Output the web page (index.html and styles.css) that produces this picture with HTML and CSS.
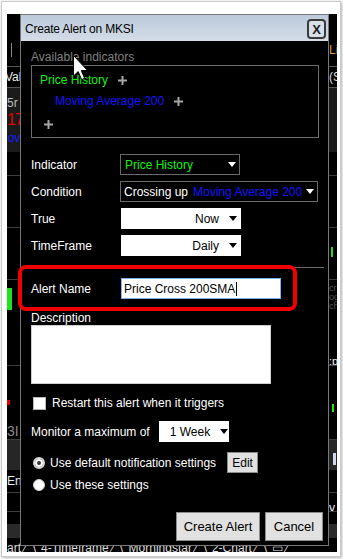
FILE: index.html
```html
<!DOCTYPE html>
<html>
<head>
<meta charset="utf-8">
<title>Create Alert</title>
<link rel="stylesheet" href="styles.css">
</head>
<body>
<div class="frame">
  <div class="screen">
    <div class="bg">
      <div class="row r1"><div class="lc"><i class="tick"></i></div><div class="rc"><span class="orange">Li</span></div></div>
      <div class="row r2"><div class="lc"><span class="clipl">Val</span></div><div class="rc">(S</div></div>
      <div class="row r3">
        <div class="lc stack"><span class="t5r">5r</span><span class="t17">17</span><span class="tlov">lov</span></div>
        <div class="rc"></div>
      </div>
      <div class="row r4 line"><div class="lc"></div><div class="rc"></div></div>
      <div class="row r5 line"><div class="lc"></div><div class="rc"></div></div>
      <div class="row r6 line"><div class="lc"></div><div class="rc"><i class="gtick"></i></div></div>
      <div class="row r7 line"><div class="lc"><i class="gbar"></i></div><div class="rc stack faint"><span>cr</span><span>og</span><span>ch</span><span class="wp">:p</span></div></div>
      <div class="row r8 line"><div class="lc stack"><i class="rbar"></i><span class="t3">3I</span></div><div class="rc"><i class="gtick2"></i></div></div>
      <div class="row r9 band"><div class="lc"></div><div class="rc"><i class="lt"></i></div></div>
      <div class="row r10 line"><div class="lc"><span class="wht">En</span></div><div class="rc"></div></div>
      <div class="row r11 line"><div class="lc"></div><div class="rc"><span class="wht">y</span></div></div>
      <div class="row r12"><div class="lc"></div><div class="rc"></div></div>
      <div class="row r13 band2"><div class="lc"></div><div class="rc"></div></div>
      <div class="row r14"><span class="tabs">art ⁄ ∖ 4-Timeframe ⁄ ∖ Morningstar ⁄ ∖ 2-Chart ⁄ ∖ ▭ ⁄</span></div>
    </div>

    <div class="dialog">
      <div class="titlebar">
        <span class="title">Create Alert on MKSI</span>
        <span class="close">X</span>
      </div>
      <div class="body">
        <div class="avail">Available indicators</div>
        <div class="indbox">
          <div class="irow"><span class="green">Price History</span><svg class="plus" width="9" height="9" viewBox="0 0 9 9"><rect x="3.5" y="0" width="2" height="9"/><rect x="0" y="3.5" width="9" height="2"/></svg></div>
          <div class="irow sub"><span class="blue">Moving Average 200</span><svg class="plus" width="9" height="9" viewBox="0 0 9 9"><rect x="3.5" y="0" width="2" height="9"/><rect x="0" y="3.5" width="9" height="2"/></svg></div>
          <div class="irow add"><svg class="plus" width="9" height="9" viewBox="0 0 9 9"><rect x="3.5" y="0" width="2" height="9"/><rect x="0" y="3.5" width="9" height="2"/></svg></div>
        </div>

        <div class="frow first">
          <span class="lbl">Indicator</span>
          <div class="sel dark w-ind"><span class="green">Price History</span><svg class="arr" width="8" height="5" viewBox="0 0 8 5"><polygon points="0,0 8,0 4,5" fill="#fff"/></svg></div>
        </div>
        <div class="frow">
          <span class="lbl">Condition</span>
          <div class="sel dark w-cond"><span class="wtxt">Crossing up</span><span class="blue cond-ma">Moving Average 200</span><svg class="arr" width="8" height="5" viewBox="0 0 8 5"><polygon points="0,0 8,0 4,5" fill="#fff"/></svg></div>
        </div>
        <div class="frow">
          <span class="lbl">True</span>
          <div class="sel light w-true"><span class="rtxt">Now</span><svg class="arr" width="8" height="5" viewBox="0 0 8 5"><polygon points="0,0 8,0 4,5" fill="#000"/></svg></div>
        </div>
        <div class="frow">
          <span class="lbl">TimeFrame</span>
          <div class="sel light w-true"><span class="rtxt">Daily</span><svg class="arr" width="8" height="5" viewBox="0 0 8 5"><polygon points="0,0 8,0 4,5" fill="#000"/></svg></div>
        </div>
        <div class="sep"></div>
        <div class="frow name">
          <span class="lbl">Alert Name</span>
          <div class="input"><span>Price Cross 200SMA</span><i class="caret"></i></div>
        </div>
        <div class="desc-lbl">Description</div>
        <div class="textarea"></div>
        <div class="crow">
          <span class="check"></span><span>Restart this alert when it triggers</span>
        </div>
        <div class="mrow">
          <span>Monitor a maximum of</span>
          <div class="sel light w-week"><span class="wk">1 Week</span><svg class="arr" width="8" height="5" viewBox="0 0 8 5"><polygon points="0,0 8,0 4,5" fill="#000"/></svg></div>
        </div>
        <div class="rrow one">
          <span class="radio on"></span><span>Use default notification settings</span><span class="btn edit">Edit</span>
        </div>
        <div class="rrow two">
          <span class="radio"></span><span>Use these settings</span>
        </div>
        <div class="brow">
          <span class="btn big create">Create Alert</span>
          <span class="btn big cancel">Cancel</span>
        </div>
      </div>
    </div>

    <div class="annot"></div>
    <svg class="cursor" width="16" height="26" viewBox="0 0 16 26">
      <path d="M0.5 0.5 L0.5 21 L5.2 16.6 L8.6 24.6 L11.6 23.3 L8.3 15.5 L14.6 15.5 Z" fill="#fff" stroke="#000" stroke-width="1"/>
    </svg>
  </div>
</div>
</body>
</html>
```

FILE: styles.css
```css
* { box-sizing: border-box; }
html, body { margin: 0; padding: 0; background: #fff; }
body {
  width: 343px; height: 559px; overflow: hidden;
  font-family: "Liberation Sans", Arial, sans-serif;
  font-size: 12px; color: #fff;
}
.frame {
  margin: 1px 0 0 1px;
  width: 340px; height: 556px;
  border: 1px solid #c9c9c9;
  box-shadow: 1px 1px 3px rgba(0,0,0,0.3);
  padding: 12px 3px 4px 5px;
  background: #fff;
}
.screen {
  position: relative;
  width: 330px; height: 538px;
  background: #000;
  overflow: hidden;
}

/* background application fragments */
.bg { display: flex; flex-direction: column; width: 330px; }
.row { display: flex; justify-content: space-between; overflow: hidden; flex: none; }
.lc { width: 13px; overflow: hidden; position: relative; white-space: nowrap; }
.rc { width: 8px; overflow: hidden; white-space: nowrap; color: #fff; }
.stack { display: flex; flex-direction: column; }
.line { border-bottom: 1px solid #3c3c3c; }
.r1 { height: 53px; border-bottom: 1px solid #555; }
.r1 .lc { padding: 29px 0 0 4px; }
.tick { display: block; width: 1px; height: 14px; background: #8a8a8a; }
.r1 .rc { padding-top: 29px; line-height: 14px; }
.orange { color: #d79a52; }
.r2 { height: 21px; line-height: 21px; border-bottom: 1px solid #555; }
.clipl { margin-left: -2px; color: #eee; }
.r2 .rc { color: #ddd; }
.r3 { height: 64px; background: #1b1b1b; }
.t5r { color: #bbb; line-height: 14px; margin-top: 8px; }
.t17 { color: #e00000; font-size: 16px; line-height: 20px; letter-spacing: -1px; }
.tlov { color: #1a1aff; line-height: 16px; margin-left: -2px; }
.r4 { height: 24px; }
.r5 { height: 52px; }
.r6 { height: 52px; }
.gtick { display: block; width: 2px; height: 10px; background: #22dd22; margin: 19px 0 0 2px; }
.r7 { height: 86px; }
.gbar { display: block; width: 5px; height: 22px; background: #1de21d; margin-top: 8px; }
.faint { color: #555; line-height: 9px; font-size: 9px; padding-top: 4px; }
.wp { color: #eee; font-size: 11px; margin-top: 46px; }
.r8 { height: 74px; }
.rbar { display: block; width: 3px; height: 10px; background: #e00000; margin-top: 34px; }
.t3 { color: #8a8a8a; font-size: 14px; line-height: 16px; margin-top: 18px; }
.gtick2 { display: block; width: 2px; height: 8px; background: #22dd22; margin: 38px 0 0 3px; }
.band { height: 30px; background: #262626; }
.lt { display: block; width: 3px; height: 12px; background: #cfd8e8; margin: 13px 0 0 4px; }
.r10 { height: 23px; line-height: 23px; }
.wht { color: #eee; }
.r11 { height: 19px; line-height: 30px; }
.r12 { height: 12px; }
.band2 { height: 14px; background: #2a2a2a; }
.r14 { height: 14px; }
.tabs { color: #ddd; white-space: nowrap; line-height: 12px; margin-top: 4px; }

/* dialog */
.dialog {
  position: absolute; left: 13px; top: 0;
  width: 309px; height: 532px;
  border: 1px solid #787878;
  background: #000;
  display: flex; flex-direction: column;
}
.titlebar {
  height: 26px; flex: none;
  background: linear-gradient(#bccadb, #d3dce7);
  display: flex; align-items: center; justify-content: space-between;
  padding: 0 2px 0 4px;
  color: #000;
}
.title { font-size: 12px; letter-spacing: -0.2px; margin-top: 1px; }
.close {
  width: 19px; height: 20px;
  border: 2px solid #3a3a3a; border-radius: 4px;
  background: #d6dee8;
  font-weight: bold; font-size: 13px; color: #222;
  display: flex; align-items: center; justify-content: center;
  margin-top: 2px;
}
.body { padding: 0 9px 0 10px; display: flex; flex-direction: column; flex: 1; white-space: nowrap; }
.avail { color: #808080; line-height: 15px; margin-top: 9px; }
.indbox {
  height: 73px; border: 1px solid #6b6b6b;
  padding: 6px 0 0 8px;
}
.irow { display: flex; align-items: center; height: 16px; }
.irow.sub { margin-top: 5px; padding-left: 15px; }
.irow.add { margin-top: 7px; padding-left: 4px; }
.plus { fill: #a6a6a6; margin-left: 10px; }
.irow.add .plus { margin-left: 0; }
.green { color: #14ef14; }
.blue { color: #1414ff; }

.frow { display: flex; align-items: center; height: 21px; margin-top: 6px; }
.frow.first { margin-top: 16px; }
.lbl { width: 89px; flex: none; }
.sel { height: 21px; display: flex; align-items: center; flex: none; }
.sel .arr { flex: none; }
.dark { border: 1px solid #6a6a6a; background: #000; padding: 0 3px 0 4px; justify-content: space-between; }
.w-ind { width: 120px; }
.w-cond { width: 198px; padding-left: 3px; }
.wtxt { color: #fff; }
.cond-ma { margin-left: 5px; flex: 1; }
.light { background: #fff; color: #000; margin-left: 1px; justify-content: flex-end; padding-right: 4px; }
.w-true { width: 120px; }
.rtxt { margin-right: 10px; }
.sep { height: 1px; background: #6b6b6b; margin-top: 11px; margin-right: -5px; }
.frow.name { margin-top: 10px; }
.input {
  width: 160px; height: 21px; margin-left: 1px;
  background: #fff; border: 1px solid #7ab4ec;
  color: #000; display: flex; align-items: center; padding-left: 2px;
}
.caret { display: block; width: 1px; height: 14px; background: #000; margin-left: 1px; }
.desc-lbl { line-height: 14px; margin-top: 12px; }
.textarea { width: 240px; height: 59px; background: #fff; border: 1px solid #d0d0d0; }
.crow { display: flex; align-items: center; height: 16px; margin-top: 11px; padding-left: 2px; }
.check { width: 13px; height: 13px; background: #fff; border: 1px solid #b8b8b8; margin-right: 6px; }
.mrow { display: flex; align-items: center; height: 21px; margin-top: 10px; }
.w-week { width: 70px; margin-left: 9px; justify-content: flex-start; padding-left: 11px; }
.wk { margin-right: 10px; white-space: nowrap; }
.rrow { display: flex; align-items: center; padding-left: 2px; }
.rrow.one { height: 21px; margin-top: 10px; }
.rrow.two { height: 16px; margin-top: 4px; }
.radio {
  width: 12px; height: 12px; border-radius: 50%;
  background: #fff; border: 1px solid #cfcfcf;
  margin-right: 5px; position: relative; flex: none;
}
.radio.on { border: 2px solid #d8d8d8; background: #333; box-shadow: inset 0 0 0 2px #fff; }
.btn {
  background: #e1e1e1; border: 1px solid #8c8c8c; color: #000;
  display: flex; align-items: center; justify-content: center;
}
.edit { width: 31px; height: 21px; margin-left: 11px; }
.brow { display: flex; justify-content: flex-end; margin-top: 19px; margin-right: -4px; gap: 5px; }
.big { height: 29px; font-size: 13px; }
.create { width: 84px; }
.cancel { width: 58px; }

/* overlays */
.annot {
  position: absolute; left: 11px; top: 251px;
  width: 279px; height: 46px;
  border: 4px solid #f20000; border-radius: 8px;
}
.cursor { position: absolute; left: 66px; top: 41px; }
```
